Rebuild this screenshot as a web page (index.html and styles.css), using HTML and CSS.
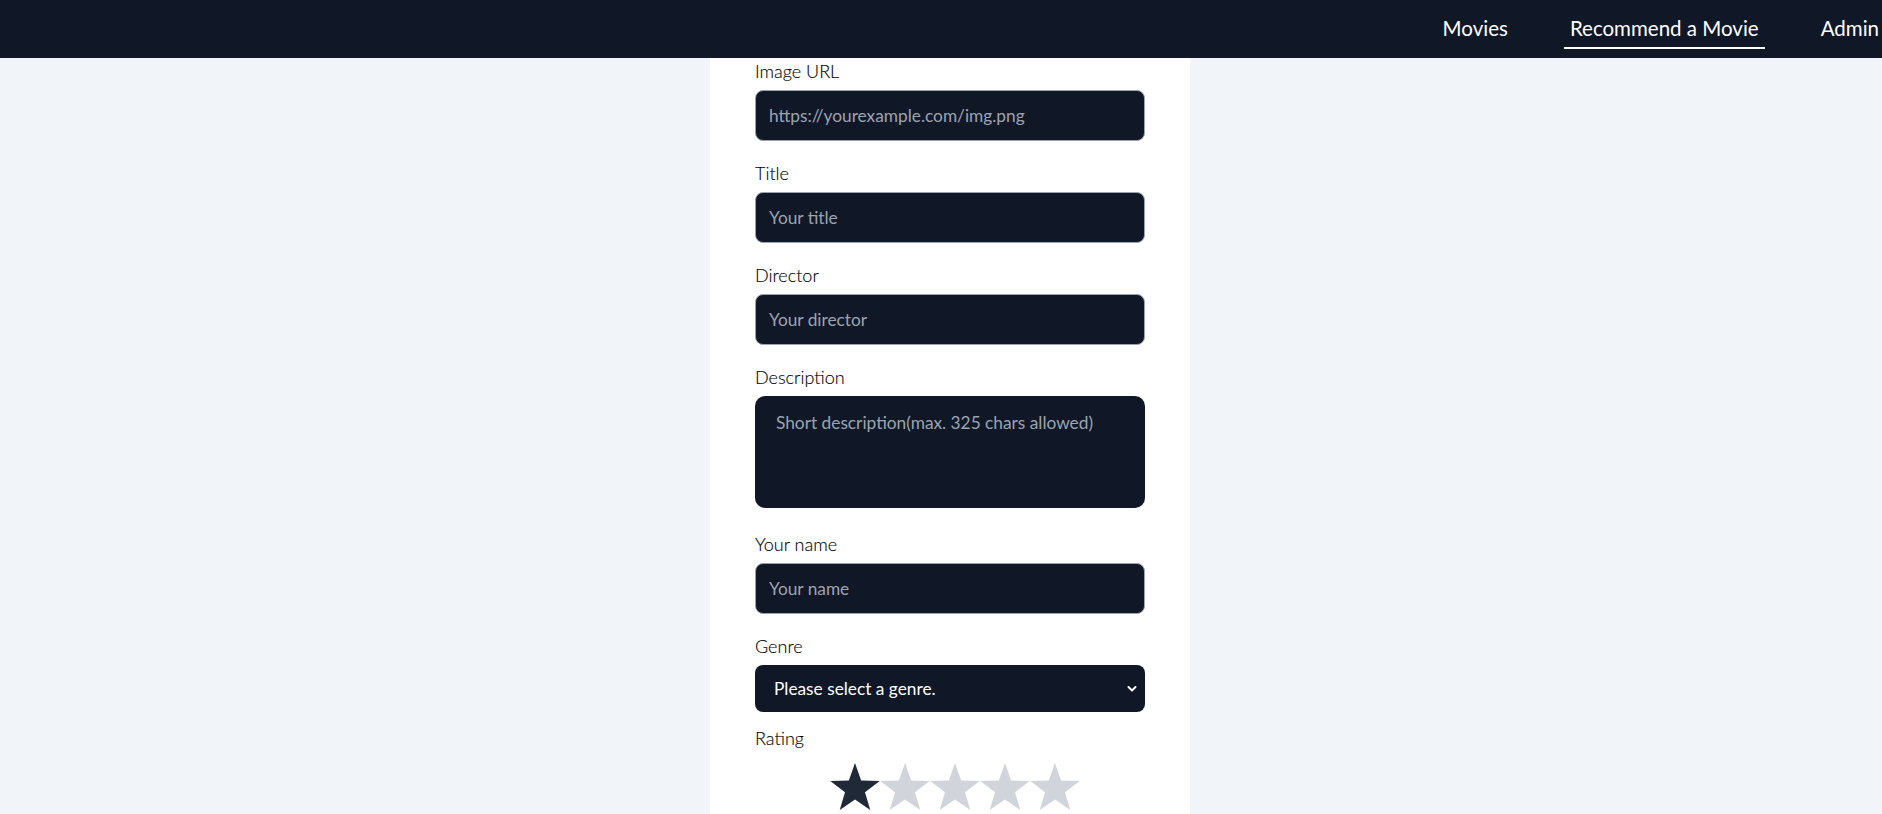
FILE: index.html
```html
<!DOCTYPE html>
<html lang="en">
<head>
<meta charset="utf-8">
<title>Recommend a Movie</title>
<link rel="stylesheet" href="styles.css">
</head>
<body>
<div class="page">
  <header class="topbar">
    <nav class="nav">
      <a class="nav-link" href="#">Movies</a>
      <a class="nav-link active" href="#">Recommend a Movie</a>
      <a class="nav-link" href="#">Admin</a>
    </nav>
  </header>
  <main class="card">
    <form class="form">
      <div class="field">
        <label class="label">Image URL</label>
        <input class="input" type="text" placeholder="https://yourexample.com/img.png">
      </div>
      <div class="field">
        <label class="label">Title</label>
        <input class="input" type="text" placeholder="Your title">
      </div>
      <div class="field">
        <label class="label">Director</label>
        <input class="input" type="text" placeholder="Your director">
      </div>
      <div class="field field-area">
        <label class="label">Description</label>
        <textarea class="textarea" placeholder="Short description(max. 325 chars allowed)"></textarea>
      </div>
      <div class="field">
        <label class="label">Your name</label>
        <input class="input" type="text" placeholder="Your name">
      </div>
      <div class="field field-select">
        <label class="label">Genre</label>
        <div class="select-wrap">
          <select class="select">
            <option>Please select a genre.</option>
          </select>
          <svg class="chevron" width="12" height="8" viewBox="0 0 12 8"><path d="M2.5 2 L6 5.5 L9.5 2" fill="none" stroke="#ffffff" stroke-width="2" stroke-linecap="round" stroke-linejoin="round"/></svg>
        </div>
      </div>
      <div class="field">
        <label class="label">Rating</label>
        <div class="stars">
          <svg class="star on" width="50" height="49" viewBox="0 0 50 49"><polygon points="25,1 31.17,18.51 49.73,18.97 34.99,30.24 40.28,48.03 25,37.5 9.72,48.03 15.01,30.24 0.27,18.97 18.83,18.51"/></svg>
          <svg class="star" width="50" height="49" viewBox="0 0 50 49"><polygon points="25,1 31.17,18.51 49.73,18.97 34.99,30.24 40.28,48.03 25,37.5 9.72,48.03 15.01,30.24 0.27,18.97 18.83,18.51"/></svg>
          <svg class="star" width="50" height="49" viewBox="0 0 50 49"><polygon points="25,1 31.17,18.51 49.73,18.97 34.99,30.24 40.28,48.03 25,37.5 9.72,48.03 15.01,30.24 0.27,18.97 18.83,18.51"/></svg>
          <svg class="star" width="50" height="49" viewBox="0 0 50 49"><polygon points="25,1 31.17,18.51 49.73,18.97 34.99,30.24 40.28,48.03 25,37.5 9.72,48.03 15.01,30.24 0.27,18.97 18.83,18.51"/></svg>
          <svg class="star" width="50" height="49" viewBox="0 0 50 49"><polygon points="25,1 31.17,18.51 49.73,18.97 34.99,30.24 40.28,48.03 25,37.5 9.72,48.03 15.01,30.24 0.27,18.97 18.83,18.51"/></svg>
        </div>
      </div>
    </form>
  </main>
</div>
</body>
</html>
```
FILE: styles.css
```css
html, body {
  margin: 0;
  padding: 0;
  overflow: hidden;
  height: 100%;
}
body {
  background: #f1f5f9;
  font-family: "Lato", "Noto Sans", sans-serif;
}
.page {
  width: 1900px;
  min-height: 100%;
  display: flex;
  flex-direction: column;
}
.topbar {
  height: 58px;
  background: #101828;
  display: flex;
  justify-content: flex-end;
  align-items: flex-start;
  padding-right: 15px;
  flex-shrink: 0;
}
.nav {
  display: flex;
  gap: 50px;
  padding-top: 16px;
}
.nav-link {
  color: #ffffff;
  text-decoration: none;
  font-size: 20.5px;
  line-height: 25px;
  padding: 0 6px 6px;
  border-bottom: 2px solid transparent;
}
.nav-link.active {
  border-bottom-color: #ffffff;
}
.card {
  width: 480px;
  box-sizing: border-box;
  margin: 0 auto;
  background: #ffffff;
  padding: 2px 45px 60px;
  flex: 1;
}
.form {
  display: flex;
  flex-direction: column;
  gap: 21px;
}
.field {
  display: flex;
  flex-direction: column;
}
.field-area {
  margin-bottom: 4px;
}
.field-select {
  margin-bottom: -6px;
}
.label {
  font-family: "Lato Light", "Lato", sans-serif;
  font-weight: 300;
  font-size: 18px;
  line-height: 23px;
  color: #000000;
  -webkit-text-stroke: 0.12px #000000;
  margin-bottom: 7px;
}
.input {
  box-sizing: border-box;
  height: 51px;
  width: 100%;
  background: #101828;
  border: 1px solid #9ca3af;
  border-radius: 8px;
  padding: 0 13px;
  font-family: "Lato", sans-serif;
  font-size: 17.3px;
  color: #ffffff;
  outline: none;
}
.input::placeholder,
.textarea::placeholder {
  color: #9ca3af;
}
.textarea {
  box-sizing: border-box;
  display: block;
  height: 112px;
  width: 100%;
  background: #101828;
  border: none;
  border-radius: 10px;
  padding: 15px 21px;
  font-family: "Lato", sans-serif;
  font-size: 17.3px;
  line-height: 23px;
  color: #ffffff;
  resize: none;
  outline: none;
}
.select-wrap {
  position: relative;
}
.select {
  box-sizing: border-box;
  display: block;
  width: 100%;
  height: 47px;
  appearance: none;
  -webkit-appearance: none;
  background: #101828;
  border: none;
  border-radius: 8px;
  padding: 0 30px 0 19px;
  font-family: "Lato", sans-serif;
  font-size: 17.3px;
  color: #ffffff;
  outline: none;
}
.chevron {
  position: absolute;
  right: 7px;
  top: 20px;
  pointer-events: none;
}
.stars {
  display: flex;
  justify-content: center;
  padding-left: 10px;
  margin-top: 5px;
}
.star {
  display: block;
  fill: #d1d5db;
}
.star.on {
  fill: #1f2937;
}
```
